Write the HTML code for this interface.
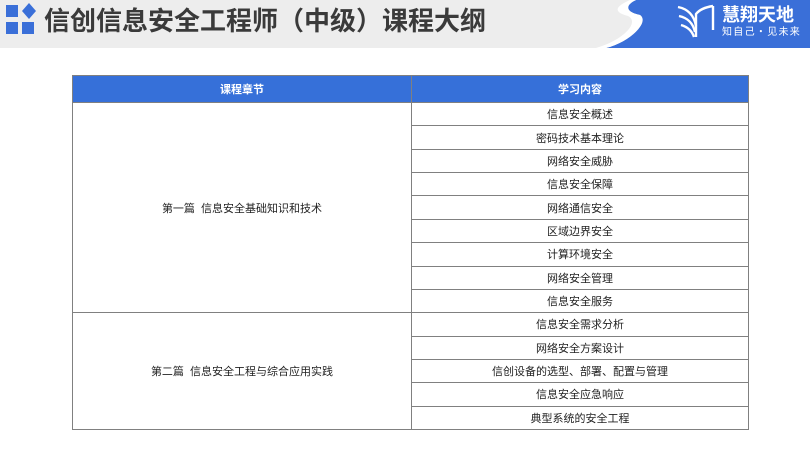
<!DOCTYPE html>
<html><head><meta charset="utf-8"><style>
*{margin:0;padding:0;box-sizing:border-box}
body{width:810px;height:452px;background:#fff;position:relative;overflow:hidden;font-family:"Liberation Sans","Noto Sans CJK SC",sans-serif}
.hdr{position:absolute;left:0;top:0;width:810px;height:48px;background:#ededed}
.title{position:absolute;left:44px;top:1px;font-size:26px;font-weight:bold;color:#3a3a3a;letter-spacing:0px;white-space:nowrap}
table{position:absolute;left:72px;top:75px;width:677px;border-collapse:collapse;font-size:11px;color:#222}
td,th{border:1px solid #808080;text-align:center;height:23.36px;padding:0}
th{background:#3670d9;color:#fff;font-weight:bold;height:27px}
</style></head><body>
<div class="hdr"></div>
<svg style="position:absolute;left:0;top:0" width="810" height="48">
<rect x="6" y="5" width="12" height="12" fill="#3a6fd8"/>
<polygon points="29,3 36,11 29,19 22,11" fill="#3a6fd8"/>
<rect x="6" y="22" width="12" height="12" fill="#3a6fd8"/>
<rect x="22" y="22" width="12" height="12" fill="#3a6fd8"/>
<path d="M636,0 C625,5 625,12 640,15 C650,22 630,42 606,48 L810,48 L810,0 Z" fill="#3a6fd8"/>
<path d="M630,0 C616,6 612,12 628,16 C640,22 624,40 596,48 L606,48 C630,42 650,22 640,15 C625,12 625,5 636,0 Z" fill="#ffffff"/>
<g fill="none" stroke="#fff" stroke-width="2.4">
<path d="M678,7 C688,9 694,15 696,26"/>
<path d="M679,16 C688,18 693,23 695,32"/>
<path d="M681,25 C688,27 692,31 694,37"/>
<path d="M696,37 L696,14 C700,9 706,7 713,6"/>
<path d="M713,6 L713,30"/>
</g>
<text x="722" y="21" font-size="18" font-weight="bold" fill="#fff" font-family="Noto Sans CJK SC,sans-serif">慧翔天地</text>
<text x="722" y="35" font-size="10" fill="#fff" letter-spacing="1.3" font-family="Noto Sans CJK SC,sans-serif">知自己·见未来</text>
</svg>
<div class="title">信创信息安全工程师（中级）课程大纲</div>
<table>
<tr><th style="width:339px">课程章节</th><th>学习内容</th></tr>
<tr><td rowspan="9">第一篇&nbsp; 信息安全基础知识和技术</td><td>信息安全概述</td></tr>
<tr><td>密码技术基本理论</td></tr>
<tr><td>网络安全威胁</td></tr>
<tr><td>信息安全保障</td></tr>
<tr><td>网络通信安全</td></tr>
<tr><td>区域边界安全</td></tr>
<tr><td>计算环境安全</td></tr>
<tr><td>网络安全管理</td></tr>
<tr><td>信息安全服务</td></tr>
<tr><td rowspan="5">第二篇&nbsp; 信息安全工程与综合应用实践</td><td>信息安全需求分析</td></tr>
<tr><td>网络安全方案设计</td></tr>
<tr><td>信创设备的选型、部署、配置与管理</td></tr>
<tr><td>信息安全应急响应</td></tr>
<tr><td>典型系统的安全工程</td></tr>
</table>
</body></html>
